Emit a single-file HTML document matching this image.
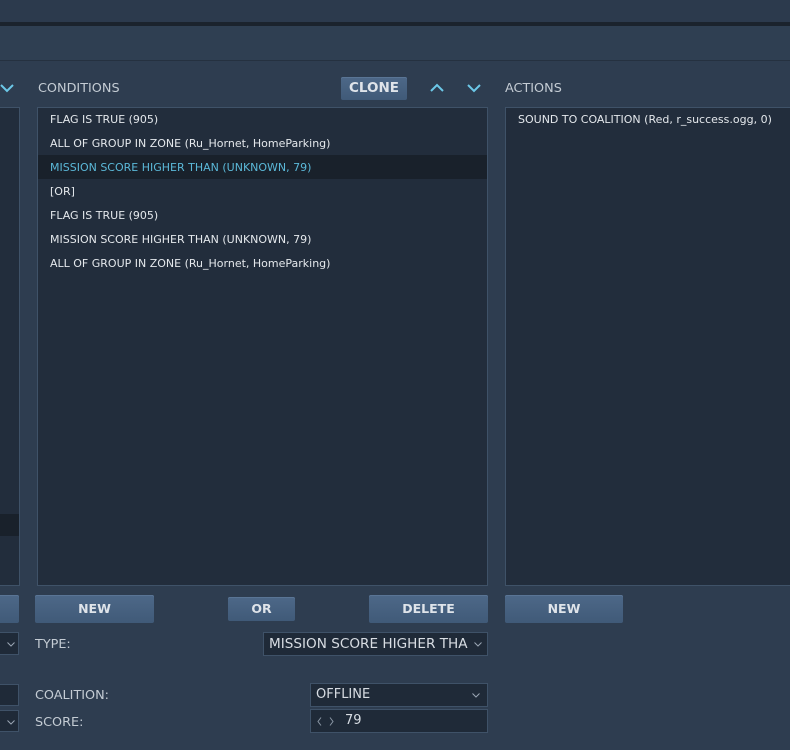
<!DOCTYPE html>
<html><head><style>
body{margin:0;width:790px;height:750px;background:#2e3d50;position:relative;overflow:hidden;font-family:"DejaVu Sans","Liberation Sans",sans-serif;color:#e4e8ec}
div{position:absolute;box-sizing:border-box}
.bar1{left:0;top:0;width:790px;height:22px;background:#2c3a4d}
.l1{left:0;top:22px;width:790px;height:4px;background:#1b232d}
.bar2{left:0;top:26px;width:790px;height:34px;background:#2f3f52}
.l2{left:0;top:60px;width:790px;height:1px;background:#253140}
.list{background:#222d3c;border:1px solid #3f5268}
.row{left:12px;height:24px;line-height:24px;font-size:11px;white-space:nowrap}
.hdr{font-size:12.8px;color:#c4ccd4}
.btn{background:linear-gradient(#4d6888,#405a78);border-radius:2px;font-weight:bold;font-size:12.5px;text-align:center;color:#dfe4ea;box-shadow:inset 0 1px 0 #5a7595}
.dd{background:#1f2a38;border:1px solid #3f5268;font-size:13px;line-height:20px;padding-left:5px;color:#d8dde3;white-space:nowrap}
.lbl{font-size:12.8px;color:#c4ccd4}
.ar{position:absolute}
</style></head><body>
<div class="bar1"></div><div class="l1"></div><div class="bar2"></div><div class="l2"></div>

<svg style="position:absolute;left:0;top:82px" width="14" height="12"><path d="M1 3 L7 9 L13 3" stroke="#6cc8e8" stroke-width="2" fill="none"/></svg>
<div class="hdr" style="left:38px;top:81px">CONDITIONS</div>
<div class="btn" style="left:341px;top:77px;width:66px;height:23px;line-height:23px;font-size:13.5px">CLONE</div>
<svg style="position:absolute;left:430px;top:82px" width="14" height="12"><path d="M1 9 L7 3 L13 9" stroke="#6cc8e8" stroke-width="2" fill="none"/></svg>
<svg style="position:absolute;left:467px;top:82px" width="14" height="12"><path d="M1 3 L7 9 L13 3" stroke="#6cc8e8" stroke-width="2" fill="none"/></svg>
<div class="hdr" style="left:505px;top:81px">ACTIONS</div>

<div class="list" style="left:-2px;top:107px;width:22px;height:479px"><div style="left:0;top:406px;width:20px;height:22px;background:#19212b"></div></div>
<div class="list" style="left:37px;top:107px;width:451px;height:479px">
<div style="left:0;top:47px;width:449px;height:24px;background:#19212b"></div>
<div class="row" style="top:0">FLAG IS TRUE (905)</div>
<div class="row" style="top:24px">ALL OF GROUP IN ZONE (Ru_Hornet, HomeParking)</div>
<div class="row" style="top:48px;color:#5bb8d8">MISSION SCORE HIGHER THAN (UNKNOWN, 79)</div>
<div class="row" style="top:72px">[OR]</div>
<div class="row" style="top:96px">FLAG IS TRUE (905)</div>
<div class="row" style="top:120px">MISSION SCORE HIGHER THAN (UNKNOWN, 79)</div>
<div class="row" style="top:144px">ALL OF GROUP IN ZONE (Ru_Hornet, HomeParking)</div>
</div>
<div class="list" style="left:505px;top:107px;width:290px;height:479px">
<div class="row" style="top:0">SOUND TO COALITION (Red, r_success.ogg, 0)</div>
</div>

<div class="btn" style="left:-4px;top:595px;width:23px;height:28px"></div>
<div class="btn" style="left:35px;top:595px;width:119px;height:28px;line-height:28px">NEW</div>
<div class="btn" style="left:228px;top:597px;width:67px;height:24px;line-height:24px">OR</div>
<div class="btn" style="left:369px;top:595px;width:119px;height:28px;line-height:28px">DELETE</div>
<div class="btn" style="left:505px;top:595px;width:118px;height:28px;line-height:28px">NEW</div>

<div class="dd" style="left:-2px;top:632px;width:21px;height:23px"><svg class="ar" style="left:8px;top:9px" width="8" height="5"><path d="M0.5 0.5 L4 4 L7.5 0.5" stroke="#9aa6b4" fill="none"/></svg></div>
<div class="dd" style="left:-2px;top:684px;width:21px;height:22px"></div>
<div class="dd" style="left:-2px;top:710px;width:21px;height:22px"><svg class="ar" style="left:8px;top:9px" width="8" height="5"><path d="M0.5 0.5 L4 4 L7.5 0.5" stroke="#9aa6b4" fill="none"/></svg></div>

<div class="lbl" style="left:35px;top:637px">TYPE:</div>
<div class="dd" style="left:263px;top:632px;width:225px;height:24px;line-height:22px;font-size:13.6px">MISSION SCORE HIGHER THA<svg class="ar" style="right:5px;top:9px" width="8" height="5"><path d="M0.5 0.5 L4 4 L7.5 0.5" stroke="#9aa6b4" fill="none"/></svg></div>
<div class="lbl" style="left:35px;top:688px">COALITION:</div>
<div class="dd" style="left:310px;top:683px;width:178px;height:24px;line-height:22px">OFFLINE<svg class="ar" style="right:7px;top:9px" width="8" height="5"><path d="M0.5 0.5 L4 4 L7.5 0.5" stroke="#9aa6b4" fill="none"/></svg></div>
<div class="lbl" style="left:35px;top:715px">SCORE:</div>
<div class="dd" style="left:310px;top:709px;width:178px;height:24px;line-height:22px"><svg style="position:absolute;left:6px;top:7px" width="20" height="9"><path d="M4 0.5 L1 4.5 L4 8.5 M13 0.5 L16 4.5 L13 8.5" stroke="#8a96a4" fill="none"/></svg><span style="position:absolute;left:34px">79</span></div>
</body></html>
